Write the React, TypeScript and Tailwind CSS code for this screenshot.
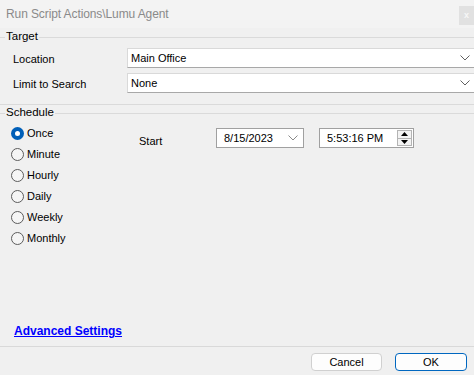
import React from 'react';

const font = { fontFamily: '"Liberation Sans", Arial, sans-serif' };

function Chevron({ color = '#606060' }: { color?: string }) {
  return (
    <svg width="10" height="6" viewBox="0 0 10 6" fill="none">
      <path d="M0.5 0.5 L5 5 L9.5 0.5" stroke={color} strokeWidth="1" />
    </svg>
  );
}

function Select({ value }: { value: string }) {
  return (
    <div className="flex-1 h-[20px] bg-white border border-[#d9d9d9] border-b-[#a8a8a8] border-r-0 flex items-center pl-[3px] pr-[4px]">
      <span className="flex-1 text-[11px] text-black">{value}</span>
      <Chevron />
    </div>
  );
}

function GroupHeader({ title }: { title: string }) {
  return (
    <div className="h-[16px] flex items-center">
      <div className="w-[5px] h-px bg-[#dadada]" />
      <span className="px-[1px] text-[11.5px] text-black leading-none">{title}</span>
      <div className="flex-1 h-px bg-[#dadada]" />
    </div>
  );
}

function Radio({ label, checked }: { label: string; checked?: boolean }) {
  return (
    <div className="h-[21px] flex items-center">
      {checked ? (
        <div className="w-[13px] h-[13px] rounded-full bg-[#005fb8] flex items-center justify-center">
          <div className="w-[5px] h-[5px] rounded-full bg-white" />
        </div>
      ) : (
        <div className="w-[13px] h-[13px] rounded-full border border-[#5c5c5c] bg-[#f5f5f5]" />
      )}
      <span className="ml-[3px] text-[11px] text-black">{label}</span>
    </div>
  );
}

export default function App() {
  const options = ['Once', 'Minute', 'Hourly', 'Daily', 'Weekly', 'Monthly'];

  return (
    <div className="w-[474px] h-[375px] bg-[#f0f0f0] flex flex-col overflow-hidden" style={font}>
      {/* title bar */}
      <div className="h-[28px] bg-[#f3f3f3] flex items-center pl-[6px]">
        <span className="flex-1 text-[12px] tracking-[-0.1px] text-[#8a8a8a]">Run Script Actions\Lumu Agent</span>
        <div className="mt-[3px] w-[15px] h-[19px] bg-[#e1e1e1] flex items-center justify-center text-[9px] text-[#f7f7f7] font-bold">
          x
        </div>
      </div>

      {/* Target */}
      <div className="mt-[1px]">
        <GroupHeader title="Target" />
      </div>
      <div className="mt-[3px] flex flex-col gap-[5px]">
        <div className="flex items-center">
          <span className="w-[127px] pl-[13px] pt-[3px] text-[11px] text-black">Location</span>
          <Select value="Main Office" />
        </div>
        <div className="flex items-center">
          <span className="w-[127px] pl-[13px] pt-[3px] text-[11px] text-black">Limit to Search</span>
          <Select value="None" />
        </div>
      </div>
      <div className="mt-[11px] h-px bg-[#dadada]" />

      {/* Schedule */}
      <GroupHeader title="Schedule" />
      <div className="flex mt-[1px]">
        <div className="pl-[11px] w-[139px] flex flex-col pt-[1px]">
          {options.map((o, i) => (
            <Radio key={o} label={o} checked={i === 0} />
          ))}
        </div>
        <div className="flex items-start mt-[6px]">
          <span className="w-[77px] mt-[5px] text-[11px] text-black">Start</span>
          <div className="w-[88px] h-[20px] bg-white border border-[#a0a0a0] flex items-center pl-[7px] pr-[5px]">
            <span className="flex-1 text-[11px] text-black">8/15/2023</span>
            <Chevron color="#8a8a8a" />
          </div>
          <div className="ml-[15px] w-[95px] h-[20px] bg-white border border-[#a0a0a0] flex items-center pl-[7px] pr-[1px]">
            <span className="flex-1 text-[11px] text-black">5:53:16 PM</span>
            <div className="w-[15px] h-[16px] border border-[#b4b4b4] bg-[#f3f3f3] flex flex-col">
              <div className="flex-1 flex items-center justify-center border-b border-[#b4b4b4]">
                <svg width="7" height="4" viewBox="0 0 7 4">
                  <path d="M0 4 L3.5 0 L7 4 Z" fill="#000" />
                </svg>
              </div>
              <div className="flex-1 flex items-center justify-center">
                <svg width="7" height="4" viewBox="0 0 7 4">
                  <path d="M0 0 L3.5 4 L7 0 Z" fill="#000" />
                </svg>
              </div>
            </div>
          </div>
        </div>
      </div>

      <div className="flex-1" />

      <div className="h-[16px] pl-[14px] flex items-center">
        <span className="text-[12px] font-bold text-[#0000ff] underline">Advanced Settings</span>
      </div>
      <div className="mt-[7px] h-px bg-[#d9d9d9]" />

      {/* footer */}
      <div className="h-[28px] flex items-start justify-end pt-[6px] pr-[7px] gap-[13px]">
        <button className="w-[71px] h-[18px] rounded-[4px] bg-[#fdfdfd] border border-[#d0d0d0] text-[11px] text-black leading-none">
          Cancel
        </button>
        <button className="w-[72px] h-[18px] rounded-[4px] bg-[#fdfdfd] border border-[#0067c0] text-[11px] text-black leading-none">
          OK
        </button>
      </div>
    </div>
  );
}
